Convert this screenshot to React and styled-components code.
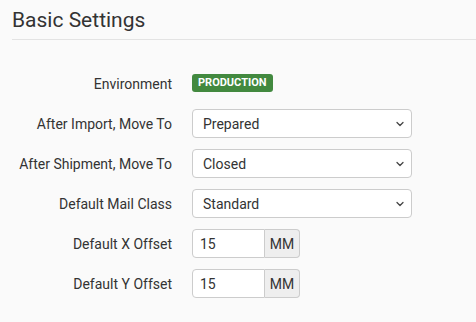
import { Fragment } from "react";
import styled, { createGlobalStyle } from "styled-components";
import { ChevronDown } from "lucide-react";

const Global = createGlobalStyle`
  body {
    margin: 0;
    background: #fafafa;
    font-family: Roboto, "Liberation Sans", sans-serif;
    color: #333;
  }
`;

const Page = styled.div`
  padding: 8px 0 0 12px;
`;

const Title = styled.h2`
  margin: 0;
  font-size: 21px;
  font-weight: 400;
  line-height: 25px;
  color: #333;
`;

const Rule = styled.hr`
  margin: 6px 0 29px;
  border: none;
  border-top: 1px solid #e3e3e3;
`;

const Form = styled.div`
  display: grid;
  grid-template-columns: 160px auto;
  column-gap: 20px;
  row-gap: 11px;
  align-items: center;
`;

const Label = styled.label`
  text-align: right;
  font-size: 14px;
  color: #333;
`;

const Field = styled.div`
  display: flex;
  align-items: center;
  height: 29px;
`;

const Badge = styled.span`
  display: inline-block;
  background: #42893f;
  color: #fff;
  font-size: 11px;
  font-weight: 700;
  line-height: 18px;
  padding: 0 6px;
  border-radius: 3px;
  margin-top: -2px;
`;

const SelectWrap = styled.div`
  position: relative;
  width: 220px;
  height: 29px;
`;

const Select = styled.select`
  appearance: none;
  width: 100%;
  height: 100%;
  border: 1px solid #ccc;
  border-radius: 4px;
  background: #fff;
  padding: 0 10px;
  font-family: inherit;
  font-size: 14px;
  color: #333;
`;

const Chevron = styled(ChevronDown)`
  position: absolute;
  right: 6px;
  top: 9px;
  color: #444;
  pointer-events: none;
`;

const Group = styled.div`
  display: flex;
  height: 29px;
`;

const Input = styled.input`
  width: 73px;
  box-sizing: border-box;
  border: 1px solid #ccc;
  border-radius: 4px 0 0 4px;
  background: #fff;
  padding: 0 7px;
  font-family: inherit;
  font-size: 14px;
  color: #333;
`;

const Addon = styled.span`
  width: 35px;
  box-sizing: border-box;
  display: flex;
  align-items: center;
  justify-content: center;
  background: #eee;
  border: 1px solid #ccc;
  border-left: none;
  border-radius: 0 4px 4px 0;
  font-size: 14px;
  color: #333;
`;

const selects = [
  ["After Import, Move To", "Prepared"],
  ["After Shipment, Move To", "Closed"],
  ["Default Mail Class", "Standard"],
];

const offsets = [
  ["Default X Offset", "15"],
  ["Default Y Offset", "15"],
];

export default function App() {
  return (
    <Page>
      <Global />
      <Title>Basic Settings</Title>
      <Rule />
      <Form>
        <Label>Environment</Label>
        <Field>
          <Badge>PRODUCTION</Badge>
        </Field>
        {selects.map(([label, value]) => (
          <Fragment key={label}>
            <Label>{label}</Label>
            <SelectWrap>
              <Select defaultValue={value}>
                <option>{value}</option>
              </Select>
              <Chevron size={12} strokeWidth={2.5} />
            </SelectWrap>
          </Fragment>
        ))}
        {offsets.map(([label, value]) => (
          <Fragment key={label}>
            <Label>{label}</Label>
            <Group>
              <Input defaultValue={value} />
              <Addon>MM</Addon>
            </Group>
          </Fragment>
        ))}
      </Form>
    </Page>
  );
}
